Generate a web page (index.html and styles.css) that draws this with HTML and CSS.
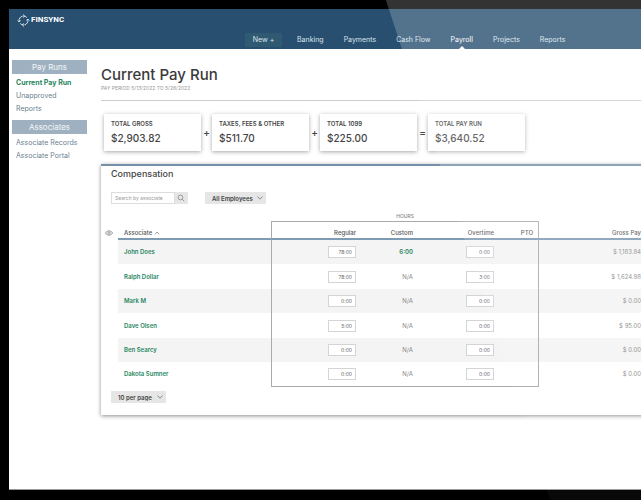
FILE: index.html
```html
<!DOCTYPE html>
<html lang="en">

<head>
    <meta charset="UTF-8">
    <title>Current Pay Run</title>
    <link rel="stylesheet" href="styles.css">
</head>

<body>
    <div class="screen">
        <header class="header">
            <a href="#" class="logo">
                <svg class="logo-icon" viewBox="0 0 14 14" fill="none" stroke="#e4edf4">
                    <path d="M6 2.300A4.800 4.800 0 0 0 2.300 8M8 11.700A4.800 4.800 0 0 0 11.700 6M3.400 10.200A4.800 4.800 0 0 0 7 11.800M10.600 3.800A4.800 4.800 0 0 0 7 2.200" />
                    <path d="M6.500 .6L8.200 2.200 6.500 3.800M7.500 13.400L5.800 11.800 7.500 10.200M.8 7L2.300 8.600 3.800 7M13.200 7L11.700 5.400 10.200 7" />
                </svg>
                <span>FINSYNC</span>
            </a>
            <nav class="nav">
                <button type="button" class="new">New +</button>
                <a href="#">Banking</a>
                <a href="#">Payments</a>
                <a href="#">Cash Flow</a>
                <a href="#" class="now">Payroll</a>
                <a href="#">Projects</a>
                <a href="#">Reports</a>
            </nav>
        </header>

        <div class="content">
            <aside class="side">
                <h2>Pay Runs</h2>
                <ul>
                    <li><a href="#" class="checked">Current Pay Run</a></li>
                    <li><a href="#">Unapproved</a></li>
                    <li><a href="#">Reports</a></li>
                </ul>
                <h2>Associates</h2>
                <ul>
                    <li><a href="#">Associate Records</a></li>
                    <li><a href="#">Associate Portal</a></li>
                </ul>
            </aside>

            <main class="main">
                <h1>Current Pay Run</h1>
                <p class="period">PAY PERIOD 5/13/2022 TO 5/26/2022</p>

                <div class="totals">
                    <div class="card">
                        <p>TOTAL GROSS</p>
                        <strong>$2,903.82</strong>
                    </div>
                    <span class="sign">+</span>
                    <div class="card">
                        <p>TAXES, FEES &amp; OTHER</p>
                        <strong>$511.70</strong>
                    </div>
                    <span class="sign">+</span>
                    <div class="card">
                        <p>TOTAL 1099</p>
                        <strong>$225.00</strong>
                    </div>
                    <span class="sign">=</span>
                    <div class="card">
                        <p>TOTAL PAY RUN</p>
                        <strong>$3,640.52</strong>
                    </div>
                </div>

                <section class="panel">
                    <h3>Compensation</h3>
                    <div class="tools">
                        <form class="search">
                            <input type="text" placeholder="Search by associate" aria-label="Search by associate">
                            <button type="button" aria-label="Search">
                                <svg viewBox="0 0 10 10" fill="none" stroke="#888" stroke-width="1">
                                    <circle cx="4.300" cy="4.300" r="3" />
                                    <path d="M6.500 6.500L9.200 9.200" />
                                </svg>
                            </button>
                        </form>
                        <div class="drop">
                            <select class="employees" aria-label="Employees">
                                <option>All Employees</option>
                            </select>
                            <svg viewBox="0 0 6 4" fill="none" stroke="#777" stroke-width=".8"><path d="M.5 .5L3 3.200 5.500 .5" /></svg>
                        </div>
                    </div>

                    <table class="pay">
                        <colgroup>
                            <col class="c-eye">
                            <col class="c-name">
                            <col class="c-regular">
                            <col class="c-custom">
                            <col class="c-over">
                            <col class="c-pto">
                            <col>
                        </colgroup>
                        <thead>
                            <tr class="group">
                                <td colspan="2"></td>
                                <th colspan="4">HOURS</th>
                                <td></td>
                            </tr>
                            <tr class="titles">
                                <td class="eye">
                                    <svg viewBox="0 0 8 6" fill="none" stroke="#777" stroke-width=".7">
                                        <path d="M.4 3C2 .1 6 .1 7.600 3C6 5.900 2 5.900 .4 3z" />
                                        <circle cx="4" cy="3" r="1.200" />
                                    </svg>
                                </td>
                                <th class="name">Associate
                                    <svg viewBox="0 0 6 4" fill="none" stroke="#888" stroke-width=".8"><path d="M1 3.300L3 1 5 3.300" /></svg>
                                </th>
                                <th class="regular">Regular</th>
                                <th>Custom</th>
                                <th>Overtime</th>
                                <th class="pto">PTO</th>
                                <th class="gross">Gross Pay</th>
                            </tr>
                        </thead>
                        <tbody>
                            <tr>
                                <td></td>
                                <td class="name"><a href="#">John Does</a></td>
                                <td class="regular"><input type="text" value="78:00" aria-label="John Does regular hours"></td>
                                <td><a href="#">6:00</a></td>
                                <td><input type="text" value="0:00" aria-label="John Does overtime hours"></td>
                                <td class="pto"></td>
                                <td class="gross">$ 1,183.84</td>
                            </tr>
                            <tr>
                                <td></td>
                                <td class="name"><a href="#">Ralph Dollar</a></td>
                                <td class="regular"><input type="text" value="78:00" aria-label="Ralph Dollar regular hours"></td>
                                <td>N/A</td>
                                <td><input type="text" value="3:00" aria-label="Ralph Dollar overtime hours"></td>
                                <td class="pto"></td>
                                <td class="gross">$ 1,624.98</td>
                            </tr>
                            <tr>
                                <td></td>
                                <td class="name"><a href="#">Mark M</a></td>
                                <td class="regular"><input type="text" value="0:00" aria-label="Mark M regular hours"></td>
                                <td>N/A</td>
                                <td><input type="text" value="0:00" aria-label="Mark M overtime hours"></td>
                                <td class="pto"></td>
                                <td class="gross">$ 0.00</td>
                            </tr>
                            <tr>
                                <td></td>
                                <td class="name"><a href="#">Dave Olsen</a></td>
                                <td class="regular"><input type="text" value="5:00" aria-label="Dave Olsen regular hours"></td>
                                <td>N/A</td>
                                <td><input type="text" value="0:00" aria-label="Dave Olsen overtime hours"></td>
                                <td class="pto"></td>
                                <td class="gross">$ 95.00</td>
                            </tr>
                            <tr>
                                <td></td>
                                <td class="name"><a href="#">Ben Searcy</a></td>
                                <td class="regular"><input type="text" value="0:00" aria-label="Ben Searcy regular hours"></td>
                                <td>N/A</td>
                                <td><input type="text" value="0:00" aria-label="Ben Searcy overtime hours"></td>
                                <td class="pto"></td>
                                <td class="gross">$ 0.00</td>
                            </tr>
                            <tr>
                                <td></td>
                                <td class="name"><a href="#">Dakota Sumner</a></td>
                                <td class="regular"><input type="text" value="0:00" aria-label="Dakota Sumner regular hours"></td>
                                <td>N/A</td>
                                <td><input type="text" value="0:00" aria-label="Dakota Sumner overtime hours"></td>
                                <td class="pto"></td>
                                <td class="gross">$ 0.00</td>
                            </tr>
                        </tbody>
                    </table>

                    <div class="drop">
                        <select class="perpage" aria-label="Rows per page">
                            <option>10 per page</option>
                        </select>
                        <svg viewBox="0 0 6 4" fill="none" stroke="#777" stroke-width=".8"><path d="M.5 .5L3 3.200 5.500 .5" /></svg>
                    </div>
                </section>
            </main>
        </div>
    </div>
    <div class="glare"></div>
</body>

</html>
```

FILE: styles.css
```css
* {
    box-sizing: border-box;
}

body {
    margin: 0;
    min-height: 100vh;
    padding: 9px 0 10px 9px;
    display: flex;
    background: #000;
    font-family: Inter, "Open Sans", sans-serif;
    font-size: 7px;
    line-height: 10px;
    color: #444;
    overflow: hidden;
}

h1,
h2,
h3,
p,
ul {
    margin: 0;
    padding: 0;
}

ul {
    list-style: none;
}

a {
    text-decoration: none;
}

input,
select,
button {
    margin: 0;
    border: 0;
    border-radius: 0;
    font-family: inherit;
}

/* light falling over the right of the monitor */
.glare {
    position: absolute;
    top: 0;
    right: 0;
    bottom: 0;
    left: 0;
    background: linear-gradient(rgba(255, 255, 255, 0.2) 20%, rgba(255, 255, 255, 0.03));
    clip-path: polygon(60.2% 0, 100% 0, 100% 100%, 85.8% 100%);
    pointer-events: none;
}

.screen {
    flex: 1;
    min-width: 0;
    background: #fff;
    border-bottom: 1px solid #999;
    overflow: hidden;
}

.header {
    height: 40px;
    display: flex;
    justify-content: space-between;
    background: #284f70;
}

.logo {
    display: flex;
    align-items: center;
    gap: 1px;
    width: 60px;
    height: 14px;
    margin: 4px 0 0 8px;
    font: bold 8px/14px Roboto, sans-serif;
    color: #fff;
}

.logo-icon {
    width: 13px;
    height: 13px;
}

.nav {
    flex: 1;
    display: flex;
    align-items: flex-end;
    gap: 20px;
    margin-left: 168px;
}

.nav a,
.new {
    height: 16px;
    font-size: 7px;
    line-height: 14px;
    color: #d9e4ec;
    white-space: nowrap;
}

.nav .new {
    width: 37px;
    height: 14px;
    padding: 0;
    margin: 0 -5px 2px 0;
    background: #305a72;
}

.nav .now {
    position: relative;
    color: #fff;
}

.nav .now::after {
    content: "";
    position: absolute;
    left: 50%;
    bottom: 0;
    margin-left: -3px;
    border: 3px solid transparent;
    border-top: 0;
    border-bottom-color: #fff;
}

.content {
    display: flex;
}

.side {
    width: 78px;
    padding: 11px 0 0 3px;
}

.side h2 {
    height: 14px;
    background: #9fb1c1;
    color: #f4f7f9;
    font-size: 8px;
    font-weight: normal;
    line-height: 14px;
    text-align: center;
}

.side ul {
    padding: 2px 0 5px 4px;
}

.side li {
    line-height: 13px;
    white-space: nowrap;
}

.side a {
    color: #6b7f90;
}

.side .checked {
    color: #27865f;
    font-weight: bold;
}

.main {
    flex: 1;
    min-width: 0;
    padding: 16px 0 0 14px;
}

h1 {
    font-size: 15px;
    line-height: 20px;
    font-weight: 500;
    color: #3a3a3a;
}

.period {
    height: 16px;
    border-bottom: 1px solid #ccc;
    font-size: 5px;
    line-height: 6px;
    color: #999;
}

.totals {
    display: flex;
    padding: 13px 3px;
}

.card {
    width: 97px;
    height: 37px;
    padding: 5px 7px;
    background: #fff;
    box-shadow: 0 1px 4px rgba(0, 0, 0, 0.35);
}

.card p {
    font-size: 6px;
    line-height: 10px;
    font-weight: 600;
    white-space: nowrap;
}

.card strong {
    display: block;
    font-size: 10px;
    line-height: 18px;
    font-weight: 500;
}

.sign {
    width: 11px;
    font-size: 10px;
    line-height: 36px;
    font-weight: 500;
    text-align: center;
}

/* the panel runs on past the edge of the screen */
.panel {
    margin-right: -12px;
    padding: 0 0 12px 3px;
    border-top: 2px solid #7690a8;
    background: #fff;
    box-shadow: 0 1px 4px rgba(0, 0, 0, 0.45);
}

.panel h3 {
    padding-left: 7px;
    font-size: 9px;
    line-height: 16px;
    font-weight: 500;
}

.tools {
    display: flex;
    gap: 10px;
    padding: 10px 0 6px 7px;
}

.search {
    display: flex;
    width: 77px;
    height: 12px;
}

.search input {
    flex: 1;
    min-width: 0;
    padding: 0 3px;
    border: 1px solid #ddd;
    font-size: 5px;
    color: #777;
}

.search input::placeholder {
    color: #999;
}

.search button {
    width: 13px;
    padding: 2px;
    background: #e6e6e6;
}

.search svg {
    display: block;
    width: 8px;
    height: 8px;
}

.drop {
    position: relative;
    display: inline-block;
    margin-left: 7px;
}

.drop select {
    display: block;
    height: 12px;
    padding: 0 7px;
    appearance: none;
    background: #e6e6e6;
    color: #444;
    font-size: 6px;
    font-weight: 600;
}

.drop svg {
    position: absolute;
    right: 3px;
    top: 4px;
    width: 6px;
    height: 4px;
}

.drop .employees {
    width: 61px;
}

.drop .perpage {
    width: 55px;
}

.pay {
    width: 100%;
    margin-bottom: 4px;
    table-layout: fixed;
    border-spacing: 0;
}

.c-eye {
    width: 14px;
}

.c-name {
    width: 153px;
}

.c-regular {
    width: 85px;
}

.c-custom {
    width: 57px;
}

.c-over {
    width: 81px;
}

.c-pto {
    width: 45px;
}

.pay th,
.pay td {
    height: 24px;
    padding: 0;
    font-size: 6px;
    line-height: 8px;
    text-align: right;
    color: #888;
}

.pay th {
    font-weight: 500;
    color: #555;
}

.pay .group th,
.pay .group td {
    height: 12px;
    border-bottom: 1px solid #aaa;
    font-size: 5px;
    text-align: center;
    color: #888;
}

.pay .group td {
    border-color: transparent;
}

.pay .titles th,
.pay .titles td {
    height: 18px;
    padding-top: 6px;
}

.pay .titles th {
    border-bottom: 2px solid #7f9ab3;
}

.pay .titles .eye {
    padding-top: 4px;
}

.pay .name {
    padding-left: 6px;
    text-align: left;
}

.name svg {
    width: 6px;
    height: 4px;
}

.eye svg {
    display: block;
    width: 8px;
    height: 6px;
    margin-left: 1px;
}

.pay td a {
    color: #27865f;
    font-weight: 600;
}

.pay .regular {
    border-left: 1px solid #aaa;
}

.pay .pto {
    padding-right: 5px;
    border-right: 1px solid #aaa;
}

.pay .gross {
    padding-right: 12px;
}

.pay tbody tr:nth-child(even) td {
    height: 25px;
}

.pay tbody tr:nth-child(odd) td + td {
    background: #f4f4f4;
}

.pay tbody tr:last-child td {
    border-bottom: 1px solid #aaa;
}

.pay tbody tr:last-child td:first-child,
.pay tbody tr:last-child .name,
.pay tbody tr:last-child .gross {
    border-bottom-color: transparent;
}

.pay input {
    display: block;
    width: 28px;
    height: 12px;
    margin-left: auto;
    padding: 0 3px;
    border: 1px solid #d4d4d4;
    background: #fff;
    font-size: 5px;
    text-align: right;
    color: #666;
}
```
